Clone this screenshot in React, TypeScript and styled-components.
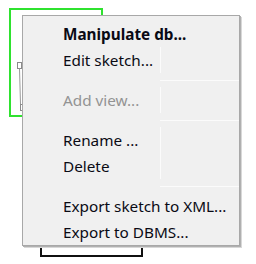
import React from 'react'
import styled, { createGlobalStyle } from 'styled-components'

const GlobalStyle = createGlobalStyle`
  html, body {
    margin: 0;
    padding: 0;
    background: #ffffff;
  }
  body {
    font-family: 'Noto Sans', 'Open Sans', sans-serif;
  }
`

const Canvas = styled.div`
  position: relative;
  width: 256px;
  height: 264px;
  overflow: hidden;
  background: #ffffff;
`

const Shape = styled.div<{ $x: number; $y: number; $w: number; $h: number; $color: string; $line?: number }>`
  position: absolute;
  left: ${(p) => p.$x}px;
  top: ${(p) => p.$y}px;
  width: ${(p) => p.$w}px;
  height: ${(p) => p.$h}px;
  box-sizing: border-box;
  border: ${(p) => p.$line ?? 2}px solid ${(p) => p.$color};
`

const Connector = styled.svg`
  position: absolute;
  left: 14px;
  top: 58px;
`

const Menu = styled.div`
  position: absolute;
  left: 22px;
  top: 15px;
  width: 218px;
  height: 231px;
  box-sizing: border-box;
  background: #f0f0f0;
  border: 1px solid #a8a8a8;
  box-shadow: 1px 1px 0 #b0b0b0, 2px 2px 0 #d8d8d8;
  display: flex;
  flex-direction: column;
  padding-top: 5px;
`

const Item = styled.div<{ $disabled?: boolean; $bold?: boolean }>`
  height: 26px;
  display: flex;
  align-items: center;
  font-size: 15.3px;
  font-weight: ${(p) => (p.$bold ? 700 : 400)};
  color: ${(p) => (p.$disabled ? '#939393' : '#0a0a14')};
  white-space: nowrap;
`

const Label = styled.span`
  padding-left: 40px;
  flex: 1;
  position: relative;
  z-index: 1;
`

const Cell = styled.div<{ $show?: boolean }>`
  width: 78px;
  align-self: stretch;
  border-left: 1px solid ${(p) => (p.$show ? '#fbfbfb' : 'transparent')};
`

const Separator = styled.div`
  height: 14px;
  display: flex;
  justify-content: flex-end;
  align-items: center;
`

const SepLine = styled.div`
  width: 78px;
  height: 1px;
  background: #fbfbfb;
  border-left: 1px solid #fbfbfb;
`

export default function App() {
  return (
    <>
      <GlobalStyle />
      <Canvas>
        <Shape $x={9} $y={8} $w={94} $h={109} $color="#2fe22f" />
        <Shape $x={40} $y={196} $w={103} $h={61} $color="#101010" />
        <Connector width="12" height="56" viewBox="0 0 12 56">
          <rect x="3.5" y="4.5" width="4" height="6" fill="none" stroke="#8a8a8a" />
          <path d="M5.5 10.5 L6.5 46" stroke="#9a9a9a" fill="none" />
          <rect x="6.5" y="46.5" width="4" height="6" fill="none" stroke="#8a8a8a" />
        </Connector>
        <Menu>
          <Item $bold>
            <Label>Manipulate db...</Label>
          </Item>
          <Item>
            <Label>Edit sketch...</Label>
            <Cell $show />
          </Item>
          <Separator>
            <SepLine />
          </Separator>
          <Item $disabled>
            <Label>Add view...</Label>
            <Cell $show />
          </Item>
          <Separator>
            <SepLine />
          </Separator>
          <Item>
            <Label>Rename ...</Label>
            <Cell $show />
          </Item>
          <Item>
            <Label>Delete</Label>
            <Cell $show />
          </Item>
          <Separator>
            <SepLine />
          </Separator>
          <Item>
            <Label>Export sketch to XML...</Label>
          </Item>
          <Item>
            <Label>Export to DBMS...</Label>
          </Item>
        </Menu>
      </Canvas>
    </>
  )
}
